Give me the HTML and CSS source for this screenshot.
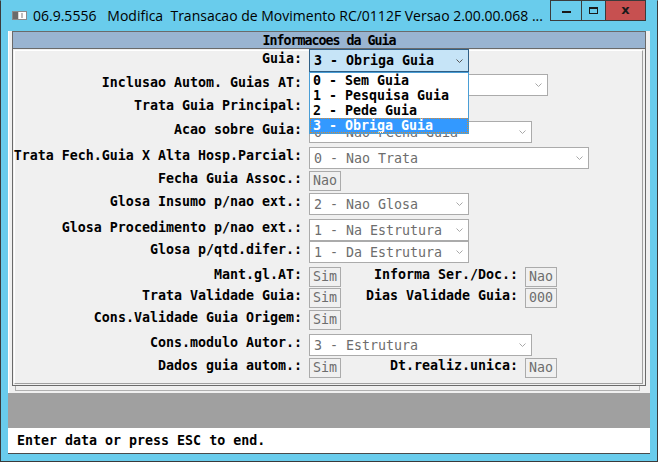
FILE: index.html
```html
<!DOCTYPE html>
<html>
<head>
<meta charset="utf-8">
<link rel="stylesheet" href="styles.css">
</head>
<body>
<div class="window">
  <div class="titlebar">
    <svg class="app-icon" width="15" height="9" viewBox="0 0 15 9">
      <rect x="0.5" y="0.5" width="14" height="8" fill="#d6d6d6" stroke="#8a8a8a"/>
      <rect x="1" y="1" width="5" height="7" fill="#6b6b6b"/>
      <rect x="7" y="1" width="7" height="7" fill="#ffffff"/>
      <rect x="9" y="2" width="2" height="5" fill="#bdbdbd"/>
    </svg>
    <div class="title">06.9.5556   Modifica  Transacao de Movimento RC/0112F Versao 2.00.00.068 ...</div>
    <div class="caption">
      <div class="cbtn cmin"><span class="min-glyph"></span></div>
      <div class="cbtn cmax"><span class="max-glyph"></span></div>
      <div class="cbtn cclose"><span class="close-glyph">x</span></div>
    </div>
  </div>
  <div class="client">
    <div class="frame-area">
      <div class="frame">
        <div class="frame-header">Informacoes da Guia</div>
        <div class="panel">
          <div class="row r23 mtn2">
            <div class="label">Guia:</div>
            <div class="select focused w160"><span>3 - Obriga Guia</span><svg class="chev" width="7" height="4" viewBox="0 0 7 4"><polyline points="0.5,0.5 3.5,3.5 6.5,0.5" fill="none" stroke="#555" stroke-width="1"/></svg></div>
          </div>
          <div class="row r22 mt2">
            <div class="label">Inclusao Autom. Guias AT:</div>
            <div class="select w239"><span></span><svg class="chev" width="7" height="4" viewBox="0 0 7 4"><polyline points="0.5,0.5 3.5,3.5 6.5,0.5" fill="none" stroke="#a8a8a8" stroke-width="1"/></svg></div>
          </div>
          <div class="row r22 mt1">
            <div class="label">Trata Guia Principal:</div>
            <div class="select w160"><span></span><svg class="chev" width="7" height="4" viewBox="0 0 7 4"><polyline points="0.5,0.5 3.5,3.5 6.5,0.5" fill="none" stroke="#a8a8a8" stroke-width="1"/></svg></div>
          </div>
          <div class="row r22 mt2">
            <div class="label">Acao sobre Guia:</div>
            <div class="select w223"><span>0 - Nao Fecha Guia</span><svg class="chev" width="7" height="4" viewBox="0 0 7 4"><polyline points="0.5,0.5 3.5,3.5 6.5,0.5" fill="none" stroke="#a8a8a8" stroke-width="1"/></svg></div>
          </div>
          <div class="row r22 mt4">
            <div class="label">Trata Fech.Guia X Alta Hosp.Parcial:</div>
            <div class="select w280"><span>0 - Nao Trata</span><svg class="chev" width="7" height="4" viewBox="0 0 7 4"><polyline points="0.5,0.5 3.5,3.5 6.5,0.5" fill="none" stroke="#a8a8a8" stroke-width="1"/></svg></div>
          </div>
          <div class="row r20 mt2">
            <div class="label">Fecha Guia Assoc.:</div>
            <div class="toggle">Nao</div>
          </div>
          <div class="row r22 mt2">
            <div class="label">Glosa Insumo p/nao ext.:</div>
            <div class="select w160"><span>2 - Nao Glosa</span><svg class="chev" width="7" height="4" viewBox="0 0 7 4"><polyline points="0.5,0.5 3.5,3.5 6.5,0.5" fill="none" stroke="#a8a8a8" stroke-width="1"/></svg></div>
          </div>
          <div class="row r22 mt4">
            <div class="label">Glosa Procedimento p/nao ext.:</div>
            <div class="select w160"><span>1 - Na Estrutura</span><svg class="chev" width="7" height="4" viewBox="0 0 7 4"><polyline points="0.5,0.5 3.5,3.5 6.5,0.5" fill="none" stroke="#a8a8a8" stroke-width="1"/></svg></div>
          </div>
          <div class="row r22">
            <div class="label">Glosa p/qtd.difer.:</div>
            <div class="select w160"><span>1 - Da Estrutura</span><svg class="chev" width="7" height="4" viewBox="0 0 7 4"><polyline points="0.5,0.5 3.5,3.5 6.5,0.5" fill="none" stroke="#a8a8a8" stroke-width="1"/></svg></div>
          </div>
          <div class="row r20 mt4">
            <div class="label">Mant.gl.AT:</div>
            <div class="toggle">Sim</div>
            <div class="label2">Informa Ser./Doc.:</div>
            <div class="toggle">Nao</div>
          </div>
          <div class="row r20 mt1">
            <div class="label">Trata Validade Guia:</div>
            <div class="toggle">Sim</div>
            <div class="label2">Dias Validade Guia:</div>
            <div class="toggle">000</div>
          </div>
          <div class="row r20 mt2">
            <div class="label">Cons.Validade Guia Origem:</div>
            <div class="toggle">Sim</div>
          </div>
          <div class="row r22 mt4">
            <div class="label">Cons.modulo Autor.:</div>
            <div class="select w223"><span>3 - Estrutura</span><svg class="chev" width="7" height="4" viewBox="0 0 7 4"><polyline points="0.5,0.5 3.5,3.5 6.5,0.5" fill="none" stroke="#a8a8a8" stroke-width="1"/></svg></div>
          </div>
          <div class="row r20 mt2">
            <div class="label">Dados guia autom.:</div>
            <div class="toggle">Sim</div>
            <div class="label2">Dt.realiz.unica:</div>
            <div class="toggle">Nao</div>
          </div>

          <div class="droplist">
            <div class="item">0 - Sem Guia</div>
            <div class="item">1 - Pesquisa Guia</div>
            <div class="item">2 - Pede Guia</div>
            <div class="item selected">3 - Obriga Guia</div>
          </div>
        </div>
      </div>
      <div class="frame-tail"></div>
    </div>
    <div class="msgbar"></div>
    <div class="status">Enter data or press ESC to end.</div>
  </div>
</div>
</body>
</html>
```
FILE: styles.css
```css
* { box-sizing: border-box; }
html, body { margin: 0; padding: 0; }
body {
  width: 658px;
  height: 462px;
  overflow: hidden;
  background: #69ccec;
  font-family: "DejaVu Sans Mono", "Liberation Mono", monospace;
  font-size: 13.3px;
}
.window {
  width: 658px;
  height: 462px;
  background: #69ccec;
  border: 1px solid #3a3a3a;
  border-top-color: #69ccec;
  padding: 0 7px 7px 7px;
  display: flex;
  flex-direction: column;
}
.titlebar {
  height: 30px;
  flex: none;
  display: flex;
  align-items: flex-start;
}
.app-icon {
  flex: none;
  margin: 10px 0 0 4px;
}
.title {
  flex: 1;
  margin: 5px 0 0 6px;
  font-family: "Open Sans", "Noto Sans", sans-serif;
  font-size: 14px;
  line-height: 20px;
  color: #000;
  white-space: pre;
  overflow: hidden;
}
.caption {
  flex: none;
  display: flex;
  margin: -1px 4px 0 0;
}
.cbtn {
  height: 21px;
  border: 1px solid #3b3b3b;
  display: flex;
  align-items: center;
  justify-content: center;
}
.cmin { width: 32px; }
.cmax { width: 25px; margin-left: -1px; }
.cclose { width: 41px; margin-left: -1px; background: #c75050; }
.min-glyph {
  width: 9px;
  height: 2px;
  background: #1a1a1a;
  margin-top: 3px;
}
.max-glyph {
  width: 9px;
  height: 7px;
  border: 1px solid #1a1a1a;
  border-top-width: 2px;
}
.close-glyph {
  font-family: "DejaVu Sans", sans-serif;
  font-weight: bold;
  font-size: 13px;
  line-height: 13px;
  color: #1a1a1a;
  margin-top: -2px;
}
.client {
  height: 423px;
  flex: none;
  display: flex;
  flex-direction: column;
  background: #f0f0f0;
}
.frame-area {
  height: 362px;
  flex: none;
  padding: 0 4px;
  display: flex;
  flex-direction: column;
  border-left: 1px solid #ffffff;
  padding-left: 3px;
}
.frame {
  height: 355px;
  flex: none;
  border: 1px solid #6a6a6a;
  display: flex;
  flex-direction: column;
}
.frame-header {
  height: 17px;
  flex: none;
  background: #99b4d1;
  border-bottom: 1px solid #6a6a6a;
  text-align: center;
  font-weight: bold;
  line-height: 17px;
  letter-spacing: -1px;
  color: #000;
}
.panel {
  flex: 1;
  margin: 1px 2px 1px 1px;
  border: 1px solid;
  border-color: #ffffff #a0a0a0 #a0a0a0 #ffffff;
  position: relative;
  display: flex;
  flex-direction: column;
}
.frame-tail {
  height: 5px;
  margin: 0 6px 0 3px;
  border: 1px solid #b0b0b0;
  border-top: none;
}
.row {
  display: flex;
  align-items: center;
  flex: none;
}
.r23 { height: 23px; }
.r22 { height: 22px; }
.r20 { height: 20px; }
.mtn2 { margin-top: -2px; }
.mt1 { margin-top: 1px; }
.mt2 { margin-top: 2px; }
.mt4 { margin-top: 4px; }
.label, .label2 {
  display: flex;
  justify-content: flex-end;
  white-space: pre;
  font-weight: bold;
  color: #000;
  line-height: 15px;
  padding-bottom: 5px;
  flex: none;
}
.label { width: 287px; }
.label2 { width: 177px; }
.select {
  height: 100%;
  margin-left: 7px;
  border: 1px solid #ababab;
  background: #ffffff;
  display: flex;
  align-items: center;
  justify-content: space-between;
  padding: 0 5px 0 4px;
  color: #6d6d6d;
  white-space: pre;
  line-height: 15px;
  flex: none;
}
.select.focused {
  background: #c6e4f7;
  border-color: #2f5f86;
  color: #000;
  font-weight: bold;
}
.w160 { width: 160px; }
.w223 { width: 223px; }
.w239 { width: 239px; }
.w280 { width: 280px; }
.chev { flex: none; }
.toggle {
  width: 32px;
  height: 20px;
  margin-left: 7px;
  border: 1px solid #ababab;
  background: #f0f0f0;
  color: #6d6d6d;
  padding-left: 3px;
  line-height: 18px;
  white-space: pre;
  flex: none;
}
.droplist {
  position: absolute;
  left: 294px;
  top: 21px;
  width: 160px;
  height: 62px;
  background: #ffffff;
  border: 1px solid #4a9ed6;
}
.item {
  height: 15px;
  line-height: 15px;
  padding-left: 3px;
  font-weight: bold;
  color: #000;
  white-space: pre;
}
.item.selected {
  background: #3399ff;
  color: #ffffff;
  outline: 1px dotted #d88a30;
  outline-offset: -1px;
}
.msgbar {
  height: 35px;
  flex: none;
  background: #a0a0a0;
}
.status {
  height: 26px;
  flex: none;
  background: #ffffff;
  border-bottom: 1px solid #4a4a4a;
  padding-left: 9px;
  font-weight: bold;
  color: #000;
  line-height: 25px;
  white-space: pre;
}
```
